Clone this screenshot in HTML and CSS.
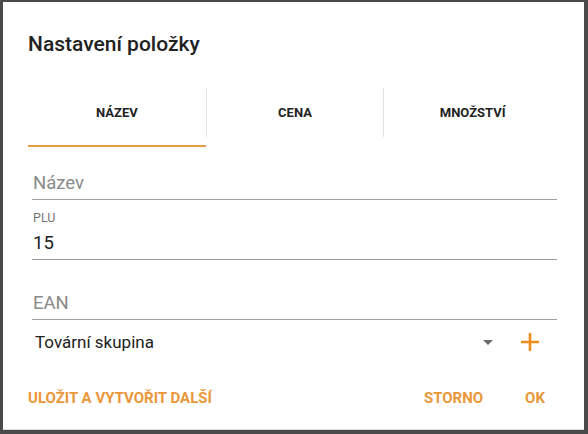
FILE: index.html
```html
<!DOCTYPE html>
<html lang="cs">
<head>
  <meta charset="UTF-8" />
  <meta name="viewport" content="width=device-width, initial-scale=1.0"/>
  <title>Nastavení položky</title>
  <link rel="stylesheet" href="styles.css">
</head>
<body>

  <div class="dialog">
    <h2 class="dialog-title">Nastavení položky</h2>

    <div class="tabs">
      <div class="tab active">
        <div class="tab-label">NÁZEV</div>
        <div class="tab-ink"></div>
      </div>
      <div class="tab">
        <div class="tab-label">CENA</div>
        <div class="tab-ink"></div>
      </div>
      <div class="tab">
        <div class="tab-label">MNOŽSTVÍ</div>
        <div class="tab-ink"></div>
      </div>
    </div>

    <div class="form">
      <div class="field first">
        <div class="field-label"></div>
        <div class="field-input hint">Název</div>
      </div>
      <div class="field">
        <div class="field-label">PLU</div>
        <div class="field-input">15</div>
      </div>
      <div class="field">
        <div class="field-label"></div>
        <div class="field-input hint">EAN</div>
      </div>

      <div class="spinner-row">
        <span class="spinner-text">Tovární skupina</span>
        <span class="spinner-arrow"></span>
        <svg class="add-icon" width="20" height="20" viewBox="0 0 20 20">
          <path d="M10 1v18M1 10h18" stroke="#f08c1e" stroke-width="2.6" fill="none"/>
        </svg>
      </div>
    </div>

    <div class="actions">
      <button class="btn">ULOŽIT A VYTVOŘIT DALŠÍ</button>
      <div class="spacer"></div>
      <button class="btn">STORNO</button>
      <button class="btn btn-ok">OK</button>
    </div>
  </div>

</body>
</html>
```

FILE: styles.css
```css
html, body {
  height: 100%;
}

body {
  margin: 0;
  padding: 2px 4px 4px 3px;
  box-sizing: border-box;
  font-family: Roboto, "Noto Sans", sans-serif;
  background: #4a4a4a;
}

.dialog {
  background: #fff;
  height: 100%;
  box-sizing: border-box;
  padding-top: 30px;
  border-bottom: 1px solid #dcdcdc;
}

.dialog-title {
  margin: 0 0 32px 25px;
  font-size: 21px;
  line-height: 24px;
  font-weight: 500;
  color: #212121;
}

.tabs {
  display: flex;
  margin: 0 23px 0 25px;
}

.tab {
  flex: 1;
  display: flex;
  flex-direction: column;
}

.tab-label {
  height: 49px;
  display: flex;
  align-items: center;
  justify-content: center;
  font-size: 13px;
  font-weight: 700;
  color: #222;
}

.tab + .tab .tab-label {
  border-left: 1px solid #e2e2e2;
}

.tab-ink {
  margin-top: 8px;
  height: 2px;
}

.tab.active .tab-ink {
  background: #e39d46;
}

.form {
  margin: 0 27px 0 29px;
}

.field {
  padding: 10px 0 2px 0;
  border-bottom: 1px solid #9e9e9e;
}

.field.first {
  padding-top: 3px;
}

.field-label {
  height: 16px;
  line-height: 16px;
  margin-bottom: 3px;
  font-size: 12.5px;
  color: #757575;
  padding-left: 1px;
}

.field-input {
  height: 28px;
  line-height: 28px;
  font-size: 18.5px;
  color: #212121;
  padding-left: 1px;
}

.field-input.hint {
  color: #8a8a8a;
}

.spinner-row {
  height: 44px;
  display: flex;
  align-items: center;
  padding-left: 3px;
}

.spinner-text {
  flex: 1;
  font-size: 17px;
  color: #212121;
}

.spinner-arrow {
  width: 0;
  height: 0;
  border-left: 5px solid transparent;
  border-right: 5px solid transparent;
  border-top: 5px solid #6b6b6b;
  margin-right: 27px;
}

.add-icon {
  margin-right: 17px;
}

.actions {
  display: flex;
  align-items: center;
  height: 36px;
  margin-top: 16px;
  padding: 0 31px 0 17px;
}

.spacer {
  flex: 1;
}

.btn {
  background: none;
  border: none;
  padding: 0 8px;
  height: 36px;
  font-family: Roboto, "Noto Sans", sans-serif;
  font-size: 15px;
  font-weight: 700;
  color: #ea973a;
}

.btn-ok {
  margin-left: 26px;
}
```
